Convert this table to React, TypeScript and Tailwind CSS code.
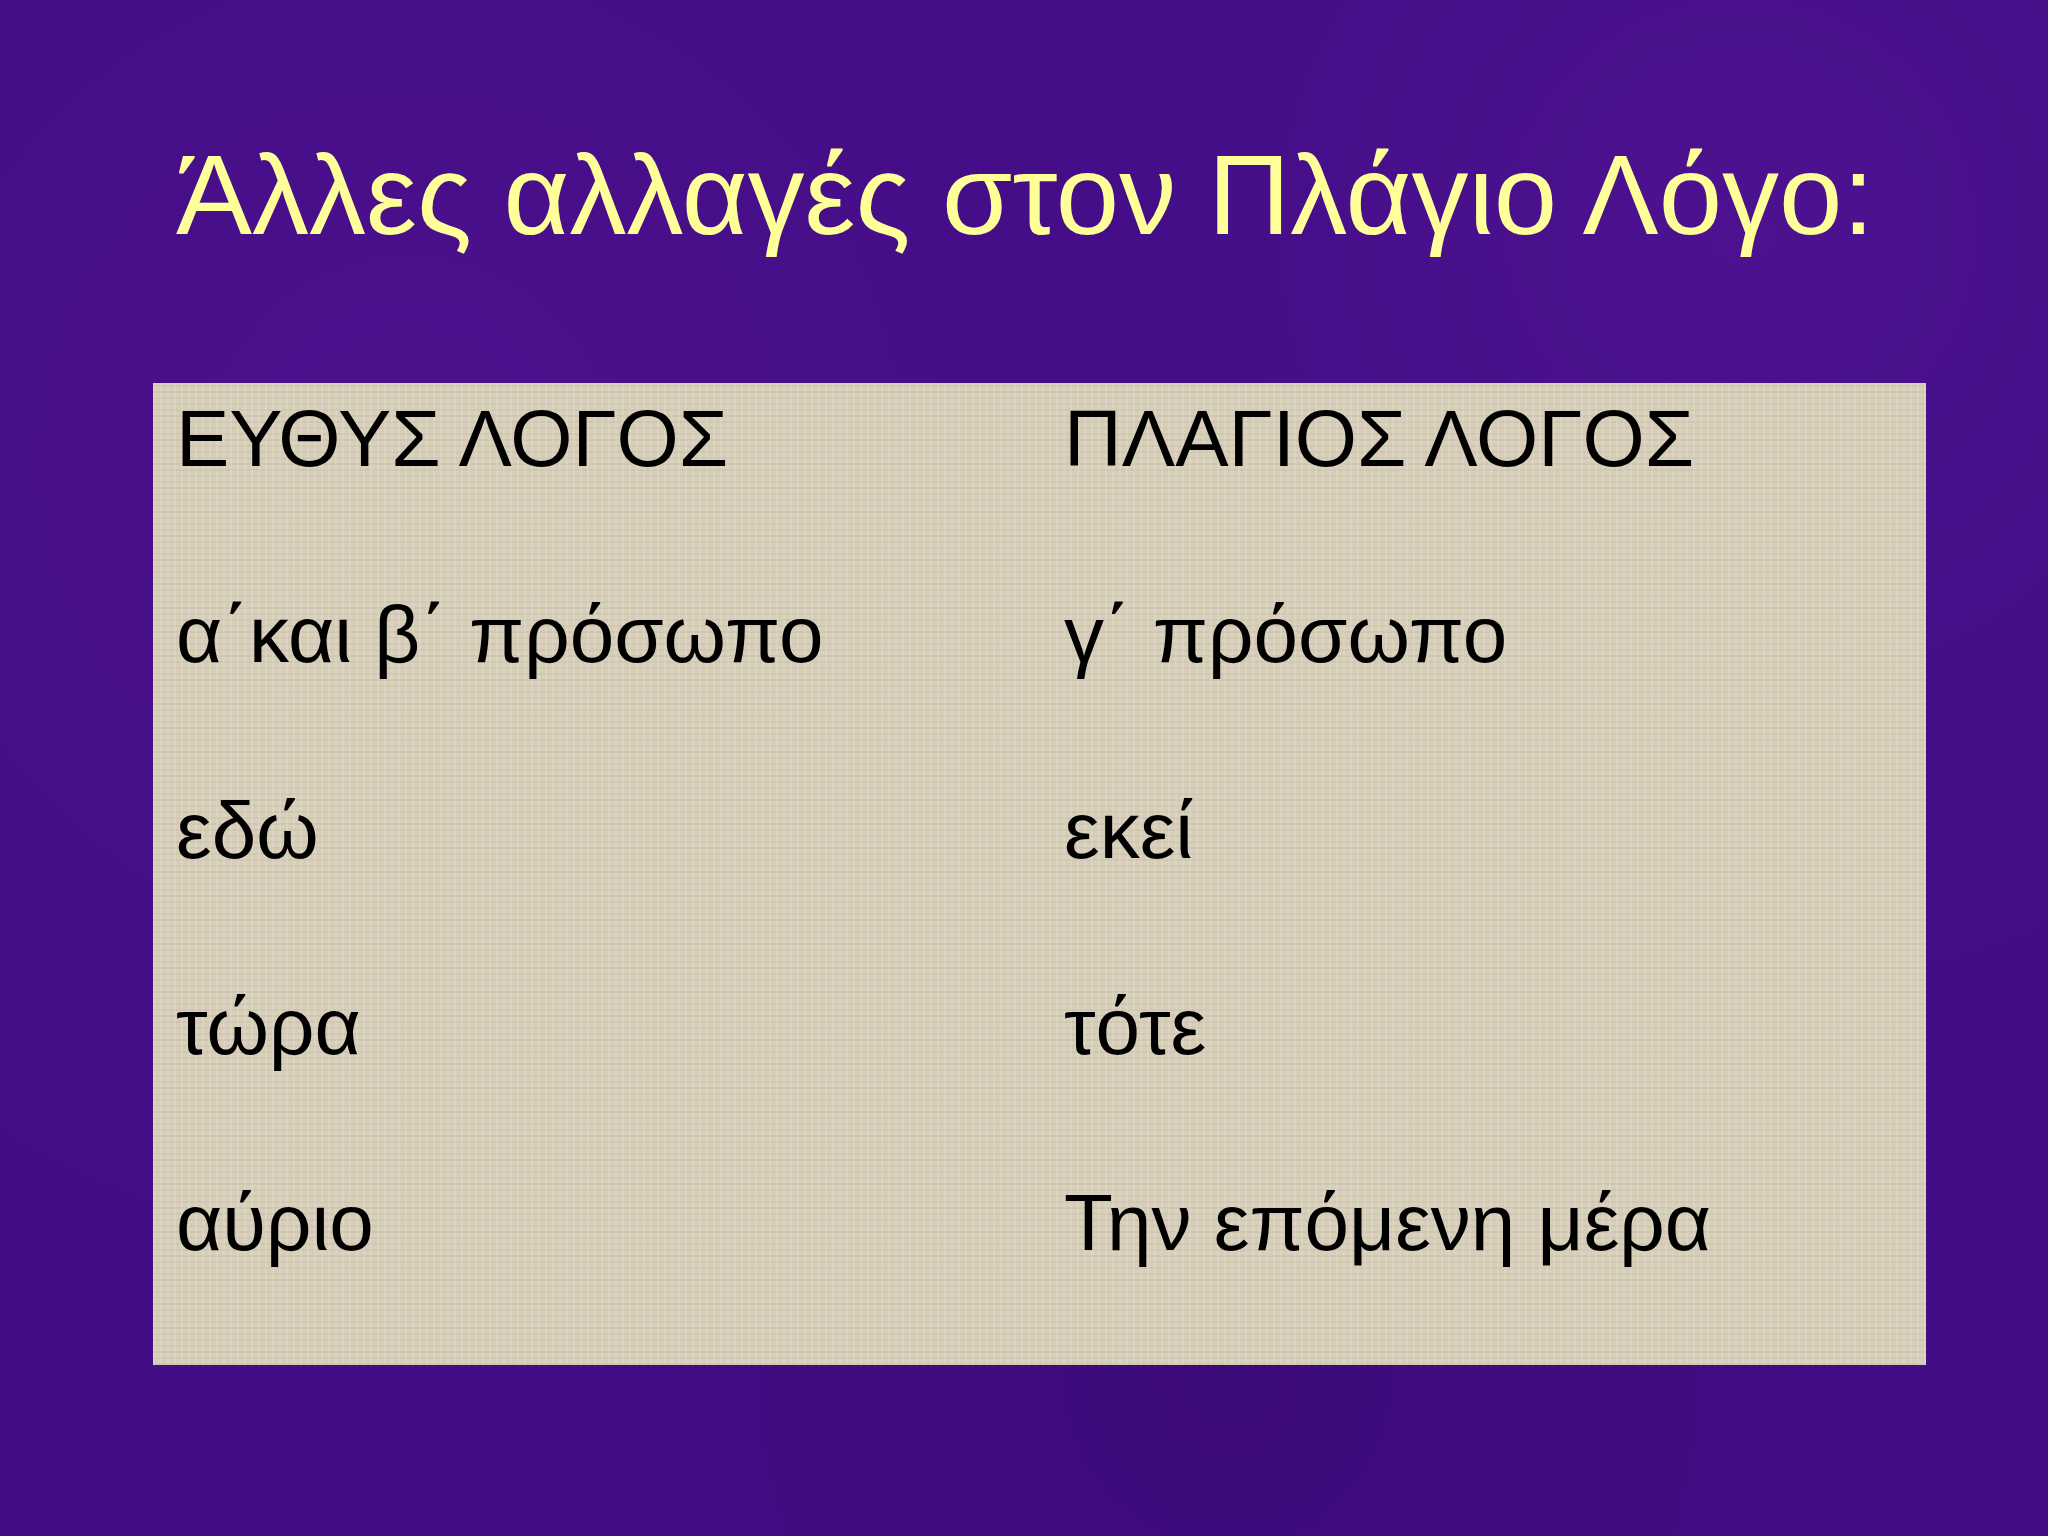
const rows: [string, string][] = [
  ['ΕΥΘΥΣ ΛΟΓΟΣ', 'ΠΛΑΓΙΟΣ ΛΟΓΟΣ'],
  ['α΄και β΄ πρόσωπο', 'γ΄ πρόσωπο'],
  ['εδώ', 'εκεί'],
  ['τώρα', 'τότε'],
  ['αύριο', 'Την επόμενη μέρα'],
];

export default function App() {
  return (
    <div className="h-[1536px] w-[2048px] overflow-hidden bg-[#420d86] bg-[radial-gradient(circle_at_20%_30%,rgba(90,20,150,0.45),transparent_40%),radial-gradient(circle_at_60%_90%,rgba(50,8,100,0.4),transparent_40%),radial-gradient(circle_at_85%_15%,rgba(95,25,160,0.35),transparent_35%)] font-['Liberation_Sans',Arial,sans-serif]">
      <h1 className="pl-[176px] pt-[129px] text-[114px] leading-[131px] text-[#ffff99]">
        Άλλες αλλαγές στον Πλάγιο Λόγο:
      </h1>
      <div className="ml-[153px] mt-[123px] h-[982px] w-[1773px] bg-[#d8cfba] bg-[repeating-linear-gradient(90deg,rgba(255,255,255,0.12)_0px,rgba(255,255,255,0.12)_2px,transparent_2px,transparent_7px),repeating-linear-gradient(0deg,rgba(120,100,70,0.08)_0px,rgba(120,100,70,0.08)_2px,transparent_2px,transparent_6px)] pt-[9px]">
        {rows.map(([a, b], i) => (
          <div key={i} className="grid h-[196px] grid-cols-[898px_1fr] text-[80px] leading-[94px] text-black">
            <div className="pl-[23px]">{a}</div>
            <div className="pl-[13px]">{b}</div>
          </div>
        ))}
      </div>
    </div>
  );
}
